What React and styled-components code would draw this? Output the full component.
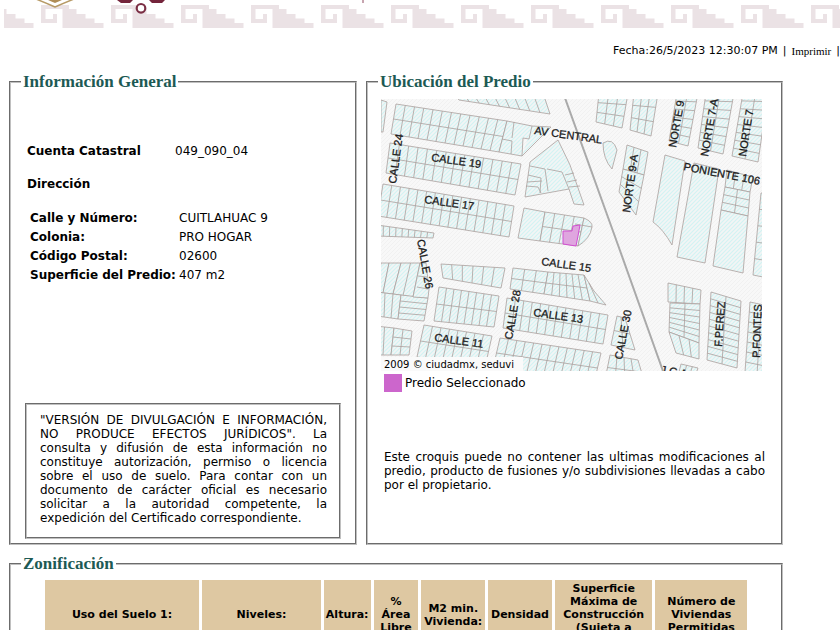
import React from "react";
import styled, { createGlobalStyle } from "styled-components";

const GlobalStyle = createGlobalStyle`
  body {
    margin: 0;
    background: #fff;
    color: #000;
    font-family: Verdana, "DejaVu Sans", sans-serif;
    font-size: 12px;
    line-height: 14px;
    overflow-x: hidden;
  }
`;

const Header = styled.header`
  padding-left: 4px;

  svg {
    display: block;
    width: 100%;
    height: 28px;
  }
`;

const DateBar = styled.div`
  display: flex;
  justify-content: flex-end;
  gap: 5px;
  margin: 16px 0 15px;
  font-size: 11px;
  white-space: nowrap;

  a {
    color: #000;
    font-family: "Liberation Serif", serif;
    text-decoration: none;
  }
`;

const Main = styled.main`
  padding: 0 57px 20px 9px;
`;

const Panels = styled.div`
  display: grid;
  grid-template-columns: 348fr 417fr;
  gap: 9px;
  margin-bottom: 10px;
`;

const Panel = styled.fieldset`
  display: flex;
  flex-direction: column;
  min-width: 0;
  margin: 0;
  padding: ${(props) => props.$padding || "0"};
  border: 2px groove #c0c0c0;
`;

const Legend = styled.legend`
  margin-left: ${(props) => props.$indent || "0"};
  padding: 0 2px;
  color: #1d5a54;
  font-family: "Liberation Serif", serif;
  font-size: 17px;
  font-weight: bold;
  line-height: 18px;
`;

const Summary = styled.table`
  margin: ${(props) => props.$margin};
  border-collapse: collapse;

  th,
  td {
    height: ${(props) => props.$row};
    padding: 0;
    text-align: left;
    white-space: nowrap;
  }

  th {
    width: ${(props) => props.$label};
  }
`;

const Notice = styled.p`
  margin: auto 14px 4px;
  padding: 8px 12px 12px 13px;
  border: 2px groove #c0c0c0;
  text-align: justify;
`;

const MapSvg = styled.svg`
  display: block;
  width: 100%;
  background: #f8f8f8;

  .lots {
    fill: url(#lot);
    stroke: #ab9f9d;
    stroke-width: 0.8;
  }

  .street {
    fill: #1a1a1a;
    stroke: #1a1a1a;
    stroke-width: 0.3;
    font: 11px "Liberation Sans", sans-serif;
  }
`;

const Key = styled.div`
  display: flex;
  align-items: center;
  gap: 3px;
  margin: 3px 0 58px 3px;

  &::before {
    content: "";
    width: 18px;
    height: 18px;
    background: #cc66cc;
  }
`;

const Caption = styled.p`
  margin: 0 -3px 0 3px;
  text-align: justify;
`;

const Zoning = styled.table`
  width: 92%;
  margin: 4px auto 12px;
  border-spacing: 3px;
  table-layout: fixed;

  th {
    padding: 2px 1px;
    background: #dec8a2;
    font-size: 11px;
    line-height: 13px;
  }
`;

// [tl, tr, br, bl], columns, rows
const blocks = [
  [[[15, 5], [126, 22], [118, 53], [10, 35]], 12, 2],
  [[[9, 44], [140, 65], [134, 96], [5, 74]], 14, 2],
  [[[2, 85], [133, 107], [128, 138], [-3, 117]], 15, 2],
  [[[-4, 126], [53, 134], [52, 139], [-4, 137]], 9, 1],
  [[[72, -6], [163, -3], [169, 15], [78, 1]], 9, 1],
  [[[143, 109], [164, 113], [159, 142], [137, 139]], 1, 1],
  [[[164, 113], [203, 119], [197, 147], [159, 142]], 4, 2],
  [[[60, 165], [124, 169], [120, 189], [62, 179]], 6, 1],
  [[[58, 188], [118, 197], [113, 228], [53, 222]], 8, 2],
  [[[43, 226], [111, 237], [104, 268], [36, 258]], 8, 2],
  [[[-6, 227], [13, 229], [10, 256], [-6, 256]], 2, 1],
  [[[13, 229], [31, 232], [28, 256], [10, 256]], 2, 3],
  [[[0, 164], [8, 164], [2, 194], [-5, 192]], 1, 1],
  [[[8, 164], [20, 164], [12, 195], [2, 194]], 1, 1],
  [[[20, 164], [39, 164], [32, 198], [12, 195]], 2, 1],
  [[[-4, 193], [20, 196], [17, 220], [-4, 217]], 3, 1],
  [[[20, 196], [47, 199], [43, 222], [17, 220]], 1, 4],
  [[[132, 169], [167, 173], [163, 195], [129, 190]], 3, 2],
  [[[167, 173], [203, 176], [209, 202], [163, 195]], 6, 2],
  [[[203, 176], [213, 192], [225, 206], [209, 202]], 2, 1],
  [[[126, 199], [227, 216], [222, 245], [122, 229]], 12, 2],
  [[[119, 239], [220, 254], [213, 284], [112, 269]], 12, 2],
  [[[236, 217], [244, 219], [254, 251], [230, 246]], 2, 2],
  [[[229, 256], [257, 261], [264, 285], [224, 281]], 4, 2],
  [[[287, 184], [320, 191], [319, 205], [287, 203]], 4, 1],
  [[[289, 204], [319, 205], [318, 244], [288, 233]], 2, 6],
  [[[288, 233], [318, 244], [318, 260], [295, 254]], 3, 1],
  [[[330, 193], [360, 202], [356, 269], [326, 261]], 2, 10],
  [[[369, 203], [392, 208], [388, 278], [364, 273]], 2, 7],
  [[[218, -6], [247, -6], [241, 29], [215, 23]], 3, 3],
  [[[253, -6], [277, -6], [270, 37], [249, 31]], 3, 3],
  [[[296, -6], [317, -6], [307, 47], [288, 42]], 2, 6],
  [[[325, -6], [353, -6], [342, 55], [317, 49]], 2, 7],
  [[[362, -6], [387, -6], [377, 63], [351, 57]], 2, 8],
  [[[246, 46], [267, 53], [263, 76], [242, 70]], 3, 1],
  [[[242, 70], [263, 76], [255, 116], [238, 93]], 1, 3],
  [[[313, 64], [338, 70], [324, 164], [296, 158]], 1, 1],
  [[[346, 71], [372, 78], [369, 93], [344, 88]], 3, 1],
  [[[344, 88], [369, 93], [367, 117], [340, 111]], 2, 3],
  [[[340, 111], [367, 117], [362, 174], [332, 167]], 1, 1],
  [[[380, 94], [396, 94], [392, 180], [372, 176]], 2, 5],
  [[[300, 265], [317, 269], [313, 280], [297, 277]], 3, 1],
];

const shapes = [
  "M126 22 151 27 170 28 141 57 118 53ZM151 27 148 40 142 39 141 57M133 23 131 39M121 40 131 42 130 55",
  "M0 1 6 3 2 33 0 33Z",
  "M177 41 149 63 144 98 188 90 193 105 203 106 189 66Z",
  "M149 67 164 70 167 92M147 76 160 79 159 94M146 83 161 82M145 87 157 88 160 94M166 70 181 73 188 90M184 76 193 74M186 83 196 81M188 88 199 87",
  "M203 119Q212 123 211 128Q209 140 197 147L203 119ZM194 125 211 128",
  "M222 44Q232 38 236 51L231 70Q222 60 222 44Z",
  "M284 56 304 62 291 146Q282 130 272 123Z",
  "M39 164 45 164 48 190 47 199 32 198ZM37 177 46 178M36 188 47 190",
];

const streets = [
  ["AV CENTRAL", 153, 35, 8],
  ["CALLE 19", 50, 62, 8],
  ["CALLE 17", 43, 104, 8],
  ["CALLE 15", 160, 166, 8],
  ["CALLE 13", 152, 217, 8],
  ["CALLE 11", 53, 242, 8],
  ["CALLE 24", 15, 85, -82],
  ["CALLE 26", 36, 141, 80],
  ["CALLE 28", 131, 241, -80],
  ["CALLE 30", 241, 261, -79],
  ["NORTE 9-A", 249, 114, -82],
  ["NORTE 9", 295, 49, -80],
  ["NORTE 7-A", 327, 58, -80],
  ["NORTE 7", 365, 58, -81],
  ["PONIENTE 106", 302, 71, 11],
  ["F.PEREZ", 341, 248, -86],
  ["P.FONTES", 379, 259, -88],
  ["J.G A", 279, 274, 10],
];

const mix = (a, b, t) => [a[0] + (b[0] - a[0]) * t, a[1] + (b[1] - a[1]) * t];

const blockPath = ([[tl, tr, br, bl], cols, rows]) => {
  let d = `M${tl}L${tr}L${br}L${bl}Z`;
  for (let r = 1; r < rows; r++) {
    d += `M${mix(tl, bl, r / rows)}L${mix(tr, br, r / rows)}`;
  }
  for (let c = 1; c < cols; c++) {
    d += `M${mix(tl, tr, c / cols)}L${mix(bl, br, c / cols)}`;
  }
  return d;
};

const address = [
  ["Calle y Número:", "CUITLAHUAC 9"],
  ["Colonia:", "PRO HOGAR"],
  ["Código Postal:", "02600"],
  ["Superficie del Predio:", "407 m2"],
];

const zoningColumns = [
  ["Uso del Suelo 1:", 155],
  ["Niveles:", 119],
  ["Altura:", 47],
  ["% Área Libre", 45],
  ["M2 min. Vivienda:", 64],
  ["Densidad", 64],
  ["Superficie Máxima de Construcción (Sujeta a restricciones*)", 98],
  ["Número de Viviendas Permitidas", 92],
];

const Band = () => (
  <Header>
    <svg aria-hidden="true">
      <defs>
        <pattern id="fret" x="37" y="0" width="70" height="28" patternUnits="userSpaceOnUse">
          <path
            fill="#ebe2e5"
            d="M0 5H28V9H35.500V14H44.500V18.500H53.500V23H62.500V28H21.500V9H4.500V19H12V14H16V23H0Z"
          />
        </pattern>
      </defs>
      <rect y="4" width="100%" height="24" fill="url(#fret)" />
      <path d="M32 -1Q42 3 51 7Q60 3 70 -1" fill="#fff" stroke="#b79a66" strokeWidth="1.500" />
      <path d="M42 -1Q46 1 51 3Q56 1 60 -1Z" fill="#b08d57" />
      <path d="M113 0H129L126 3H117Z M145 0H161L158 3H148Z" fill="#74243b" />
      <circle cx="137" cy="8.300" r="4.300" fill="#fff" stroke="#7b2f45" strokeWidth="2.200" />
      <path d="M359 0V3" stroke="#8f4a60" />
    </svg>
  </Header>
);

const LotMap = () => (
  <MapSvg viewBox="0 0 381 272" role="img" aria-label="Croquis del predio">
    <defs>
      <pattern id="lot" width="4" height="4" patternUnits="userSpaceOnUse">
        <rect width="4" height="4" fill="#f3f5f5" />
        <path d="M-1 5 5 -1M-1 1 1 -1M3 5 5 3" stroke="#d2f3f3" strokeWidth="1.100" />
      </pattern>
      <pattern id="ground" width="4" height="4" patternUnits="userSpaceOnUse">
        <path d="M-1 5 5 -1" stroke="#f1f1f1" strokeWidth="1" />
      </pattern>
    </defs>
    <rect width="381" height="272" fill="url(#ground)" />
    <g className="lots">
      {blocks.map((block, i) => (
        <path key={i} d={blockPath(block)} />
      ))}
      {shapes.map((d, i) => (
        <path key={d} d={d} fill={i === 3 ? "none" : undefined} />
      ))}
    </g>
    <path d="M184 -1 237 146 282 272" fill="none" stroke="#aaa" strokeWidth="2" />
    <path d="M182 132 191 132 192 127 199 126 197 137 195 147 182 145Z" fill="#dfa6df" stroke="#d14fd1" />
    {streets.map(([name, x, y, angle]) => (
      <text key={name} className="street" transform={`translate(${x} ${y}) rotate(${angle})`}>
        {name}
      </text>
    ))}
    <rect y="258" width="142" height="14" fill="#fafafa" />
    <text x="3" y="269" fontSize="10">
      2009 © ciudadmx, seduvi
    </text>
  </MapSvg>
);

const App = () => (
  <>
    <GlobalStyle />
    <Band />
    <DateBar>
      <span>Fecha:26/5/2023 12:30:07 PM</span>
      <span>|</span>
      <a href="#imprimir">Imprimir</a>
      <span>|</span>
    </DateBar>
    <Main>
      <Panels>
        <Panel>
          <Legend $indent="10px">Información General</Legend>
          <Summary $margin="43px 0 0 16px" $row="33px" $label="148px">
            <tbody>
              <tr>
                <th scope="row">Cuenta Catastral</th>
                <td>049_090_04</td>
              </tr>
              <tr>
                <th scope="row">Dirección</th>
                <td />
              </tr>
            </tbody>
          </Summary>
          <Summary $margin="8px 0 100px 19px" $row="19px" $label="149px">
            <tbody>
              {address.map(([label, value]) => (
                <tr key={label}>
                  <th scope="row">{label}</th>
                  <td>{value}</td>
                </tr>
              ))}
            </tbody>
          </Summary>
          <Notice>
            "VERSIÓN DE DIVULGACIÓN E INFORMACIÓN, NO PRODUCE EFECTOS JURÍDICOS". La consulta y
            difusión de esta información no constituye autorización, permiso o licencia sobre el
            uso de suelo. Para contar con un documento de carácter oficial es necesario solicitar
            a la autoridad competente, la expedición del Certificado correspondiente.
          </Notice>
        </Panel>
        <Panel $padding="8px 19px 51px 13px">
          <Legend $indent="-3px">Ubicación del Predio</Legend>
          <LotMap />
          <Key>Predio Seleccionado</Key>
          <Caption>
            Este croquis puede no contener las ultimas modificaciones al predio, producto de
            fusiones y/o subdivisiones llevadas a cabo por el propietario.
          </Caption>
        </Panel>
      </Panels>
      <Panel>
        <Legend $indent="10px">Zonificación</Legend>
        <Zoning>
          <colgroup>
            {zoningColumns.map(([name, width]) => (
              <col key={name} style={{ width: `${width / 7.1}%` }} />
            ))}
          </colgroup>
          <thead>
            <tr>
              {zoningColumns.map(([name]) => (
                <th key={name} scope="col">
                  {name}
                </th>
              ))}
            </tr>
          </thead>
        </Zoning>
      </Panel>
    </Main>
  </>
);

export default App;
